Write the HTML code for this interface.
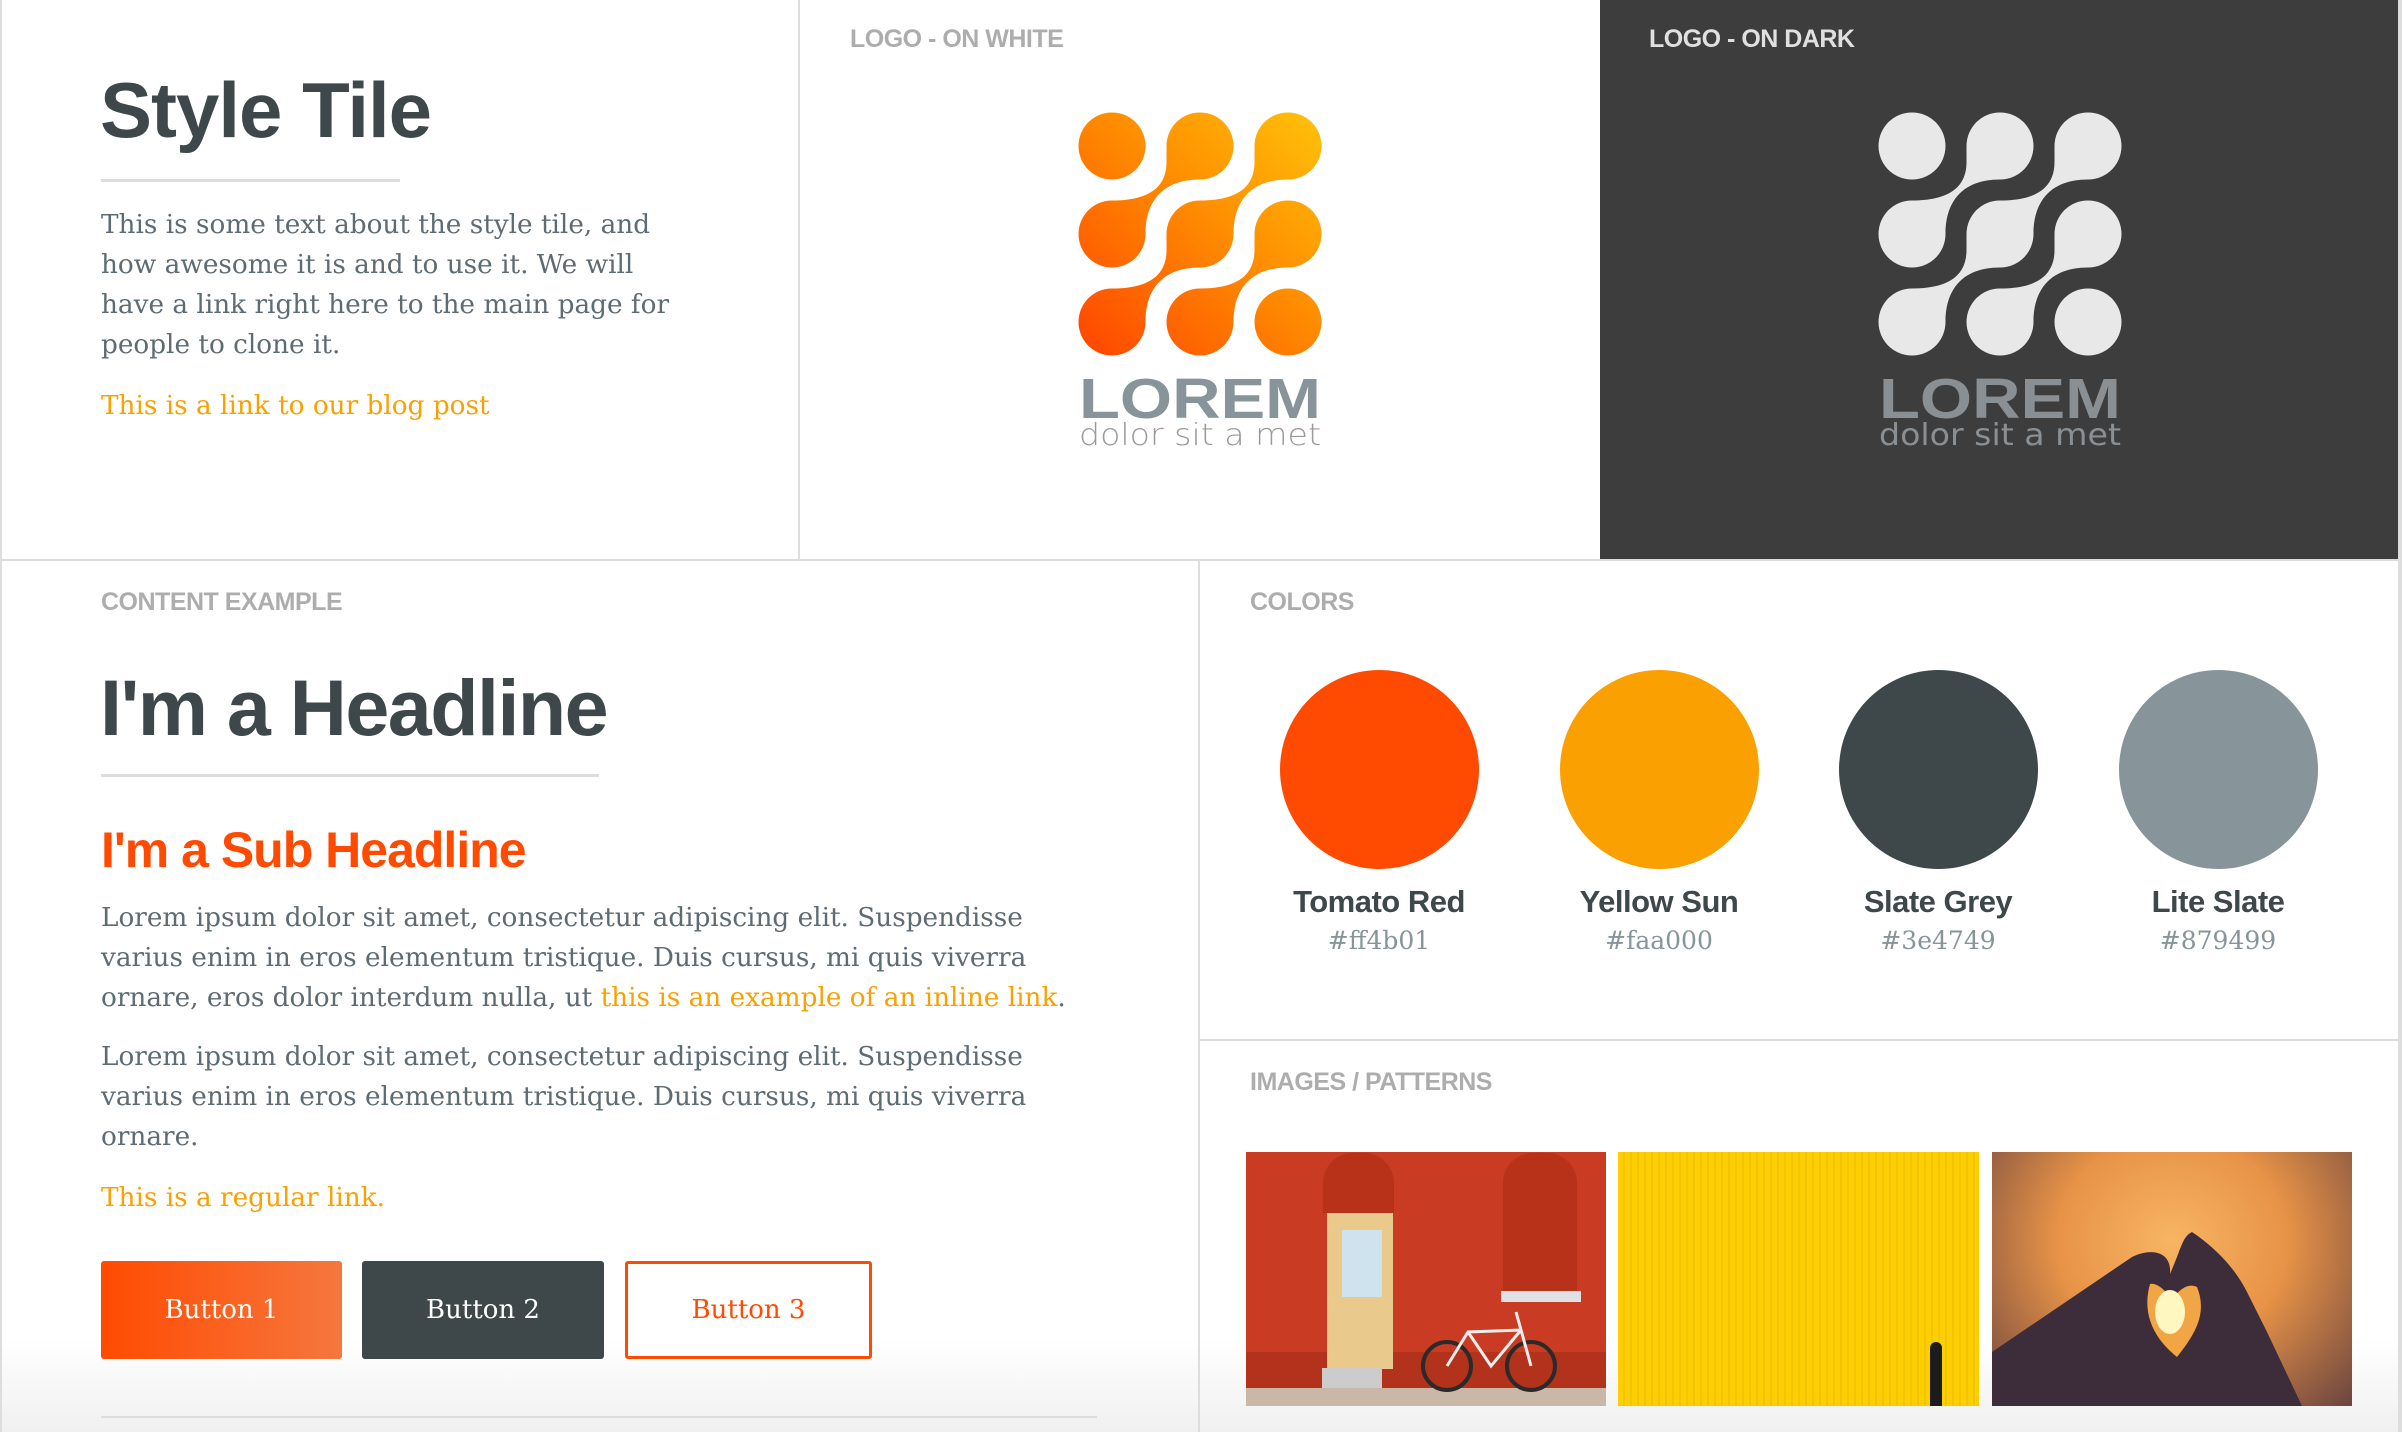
<!DOCTYPE html>
<html><head><meta charset="utf-8"><style>
*{margin:0;padding:0;box-sizing:border-box}
body{width:2402px;height:1432px;position:relative;overflow:hidden;background:#fff;font-family:"Liberation Sans",sans-serif}
.a{position:absolute;white-space:nowrap}
.lbl{font-family:"Liberation Sans",sans-serif;font-weight:bold;font-size:25px;color:#adadad;letter-spacing:-0.5px}
.ser{font-family:"DejaVu Serif",serif;font-size:26.3px;color:#5f6b72;line-height:40px}
.or{color:#faa000}
.ln{position:absolute;background:#ddd}
.cname{font-weight:bold;font-size:31px;color:#3e4749;text-align:center;width:300px;letter-spacing:-0.5px}
.chex{font-family:"DejaVu Serif",serif;font-size:25px;color:#879499;text-align:center;width:300px}
.btn{position:absolute;top:1261px;height:98px;font-family:"DejaVu Serif",serif;font-size:26px;display:flex;align-items:center;justify-content:center;border-radius:3px}
</style></head><body>
<div style="position:absolute;left:0;top:1340px;width:2402px;height:92px;background:linear-gradient(#fff,#f0f0f0)"></div>
<div class="ln" style="left:0;top:0;width:2px;height:1432px"></div>
<div class="ln" style="left:798px;top:0;width:2px;height:560px"></div>
<div class="ln" style="left:0;top:559px;width:2402px;height:2px"></div>
<div class="ln" style="left:1198px;top:560px;width:2px;height:872px"></div>
<div class="ln" style="left:1198px;top:1039px;width:1204px;height:2px"></div>
<div class="ln" style="left:2398px;top:0;width:4px;height:1432px"></div>
<div style="position:absolute;left:1600px;top:0;width:798px;height:559px;background:#3d3d3d"></div>

<div class="a" style="left:100px;top:65px;font-size:78px;font-weight:bold;color:#3e4749;letter-spacing:-1px">Style Tile</div>
<div class="ln" style="left:101px;top:179px;width:299px;height:3px"></div>
<div class="a ser" style="left:101px;top:205px">This is some text about the style tile, and<br>how awesome it is and to use it. We will<br>have a link right here to the main page for<br>people to clone it.</div>
<div class="a ser or" style="left:101px;top:386px">This is a link to our blog post</div>

<div class="a lbl" style="left:850px;top:25px">LOGO - ON WHITE</div>
<div class="a lbl" style="left:1649px;top:25px;color:#e0e0e0">LOGO - ON DARK</div>

<svg class="a" style="left:0;top:0" width="2402" height="560">
<defs><linearGradient id="g" gradientUnits="userSpaceOnUse" x1="1079" y1="355" x2="1321" y2="112"><stop offset="0" stop-color="#ff4500"/><stop offset="0.55" stop-color="#ff8c00"/><stop offset="1" stop-color="#ffc20a"/></linearGradient>
<g id="mk">
<circle cx="1112" cy="146" r="33.5"/><circle cx="1200" cy="146" r="33.5"/><circle cx="1288" cy="146" r="33.5"/>
<circle cx="1112" cy="234" r="33.5"/><circle cx="1200" cy="234" r="33.5"/><circle cx="1288" cy="234" r="33.5"/>
<circle cx="1112" cy="322" r="33.5"/><circle cx="1200" cy="322" r="33.5"/><circle cx="1288" cy="322" r="33.5"/>
<path d="M1166.5 146 L1166.5 162 C1166.5 188 1148 200.5 1112 200.5 L1112 234 L1145.5 234 C1145.5 202 1162 179.5 1200 179.5 L1200 146 Z"/>
<path d="M1254.5 146 L1254.5 162 C1254.5 188 1236 200.5 1200 200.5 L1200 234 L1233.5 234 C1233.5 202 1250 179.5 1288 179.5 L1288 146 Z"/>
<path d="M1166.5 234 L1166.5 250 C1166.5 276 1148 288.5 1112 288.5 L1112 322 L1145.5 322 C1145.5 290 1162 267.5 1200 267.5 L1200 234 Z"/>
<path d="M1254.5 234 L1254.5 250 C1254.5 276 1236 288.5 1200 288.5 L1200 322 L1233.5 322 C1233.5 290 1250 267.5 1288 267.5 L1288 234 Z"/>
</g></defs>
<use href="#mk" fill="url(#g)"/>
<text x="1079" y="418" textLength="242" lengthAdjust="spacingAndGlyphs" font-family="Liberation Sans" font-weight="bold" font-size="57" fill="#879499">LOREM</text>
<text x="1079" y="445" textLength="242" lengthAdjust="spacingAndGlyphs" font-family="DejaVu Sans" font-weight="200" font-size="30" fill="#999">dolor sit a met</text>
<use href="#mk" fill="#e8e8e8" transform="translate(800,0)"/>
<text x="1879" y="418" textLength="242" lengthAdjust="spacingAndGlyphs" font-family="Liberation Sans" font-weight="bold" font-size="57" fill="#8a8f93">LOREM</text>
<text x="1879" y="445" textLength="242" lengthAdjust="spacingAndGlyphs" font-family="DejaVu Sans" font-size="30" fill="#8a8f93">dolor sit a met</text>
</svg>

<div class="a lbl" style="left:101px;top:588px">CONTENT EXAMPLE</div>
<div class="a" style="left:100px;top:662px;font-size:79px;font-weight:bold;color:#3e4749;letter-spacing:-1.5px">I'm a Headline</div>
<div class="ln" style="left:101px;top:774px;width:498px;height:3px"></div>
<div class="a" style="left:101px;top:821px;font-size:50px;font-weight:bold;color:#ff4b01;letter-spacing:-1px">I'm a Sub Headline</div>
<div class="a ser" style="left:101px;top:898px">Lorem ipsum dolor sit amet, consectetur adipiscing elit. Suspendisse<br>varius enim in eros elementum tristique. Duis cursus, mi quis viverra<br>ornare, eros dolor interdum nulla, ut <span class="or">this is an example of an inline link</span>.</div>
<div class="a ser" style="left:101px;top:1037px">Lorem ipsum dolor sit amet, consectetur adipiscing elit. Suspendisse<br>varius enim in eros elementum tristique. Duis cursus, mi quis viverra<br>ornare.</div>
<div class="a ser or" style="left:101px;top:1178px">This is a regular link.</div>
<div class="btn" style="left:101px;width:241px;background:linear-gradient(90deg,#ff4b01,#f6773e);color:#fff">Button 1</div>
<div class="btn" style="left:362px;width:242px;background:#3e4749;color:#fff">Button 2</div>
<div class="btn" style="left:625px;width:247px;border:3px solid #ff4b01;color:#ff4b01;background:#fff">Button 3</div>
<div class="ln" style="left:101px;top:1416px;width:996px;height:2px"></div>

<div class="a lbl" style="left:1250px;top:588px">COLORS</div>
<div class="a" style="left:1280px;top:670px;width:199px;height:199px;border-radius:50%;background:#ff4b01"></div>
<div class="a" style="left:1560px;top:670px;width:199px;height:199px;border-radius:50%;background:#faa000"></div>
<div class="a" style="left:1839px;top:670px;width:199px;height:199px;border-radius:50%;background:#3e4749"></div>
<div class="a" style="left:2119px;top:670px;width:199px;height:199px;border-radius:50%;background:#879499"></div>
<div class="a cname" style="left:1229px;top:884px">Tomato Red</div>
<div class="a cname" style="left:1509px;top:884px">Yellow Sun</div>
<div class="a cname" style="left:1788px;top:884px">Slate Grey</div>
<div class="a cname" style="left:2068px;top:884px">Lite Slate</div>
<div class="a chex" style="left:1229px;top:926px">#ff4b01</div>
<div class="a chex" style="left:1509px;top:926px">#faa000</div>
<div class="a chex" style="left:1788px;top:926px">#3e4749</div>
<div class="a chex" style="left:2068px;top:926px">#879499</div>

<div class="a lbl" style="left:1250px;top:1068px">IMAGES / PATTERNS</div>
<div class="a" style="left:1246px;top:1152px;width:360px;height:254px;background:#c93b22;overflow:hidden">
 <div class="a" style="left:0;top:200px;width:360px;height:36px;background:#b2321c"></div>
 <div class="a" style="left:0;top:236px;width:360px;height:18px;background:#c9b7a8"></div>
 <div class="a" style="left:77px;top:1px;width:71px;height:60px;background:#b83219;border-radius:30px 30px 0 0"></div>
 <div class="a" style="left:257px;top:1px;width:74px;height:138px;background:#b83219;border-radius:30px 30px 0 0"></div>
 <div class="a" style="left:255px;top:139px;width:80px;height:11px;background:#dfe1e6"></div>
 <div class="a" style="left:81px;top:61px;width:66px;height:156px;background:#e9c98c"></div>
 <div class="a" style="left:96px;top:78px;width:40px;height:67px;background:#cfe3ee"></div>
 <div class="a" style="left:76px;top:216px;width:60px;height:20px;background:#ccc"></div>
 <div class="a" style="left:175px;top:188px;width:52px;height:52px;border-radius:50%;border:4px solid #2a2a2a"></div>
 <div class="a" style="left:259px;top:188px;width:52px;height:52px;border-radius:50%;border:4px solid #2a2a2a"></div>
 <svg class="a" style="left:0;top:0" width="360" height="254"><path d="M201 214 L222 180 L275 178 L285 214 M222 180 L245 214 L275 178 M270 160 L285 214" stroke="#eee" stroke-width="3" fill="none"/></svg>
</div>
<div class="a" style="left:1618px;top:1152px;width:361px;height:254px;background:repeating-linear-gradient(90deg,#fdcf00 0 5px,#f5c400 5px 7px)">
 <div class="a" style="left:312px;top:190px;width:12px;height:64px;background:#1c1c1c;border-radius:6px 6px 0 0"></div>
</div>
<div class="a" style="left:1992px;top:1152px;width:360px;height:254px;background:radial-gradient(ellipse at 50% 35%,#f7b562 0,#e89347 45%,#6a4440 100%);overflow:hidden">
 <svg width="360" height="254" style="position:absolute;left:0;top:0">
 <path d="M0 200 L140 105 C160 95 180 100 178 122 C190 95 190 85 200 80 C215 90 240 110 255 140 L275 180 L310 254 L0 254Z" fill="#3d2d3a"/>
 <path d="M158 132 C150 160 160 185 185 205 C205 180 215 160 205 135 C195 130 185 140 180 148 C175 140 165 130 158 132Z" fill="#f2a545"/>
 <ellipse cx="178" cy="160" rx="15" ry="22" fill="#fff6c0"/>
 </svg>
</div>
</body></html>
